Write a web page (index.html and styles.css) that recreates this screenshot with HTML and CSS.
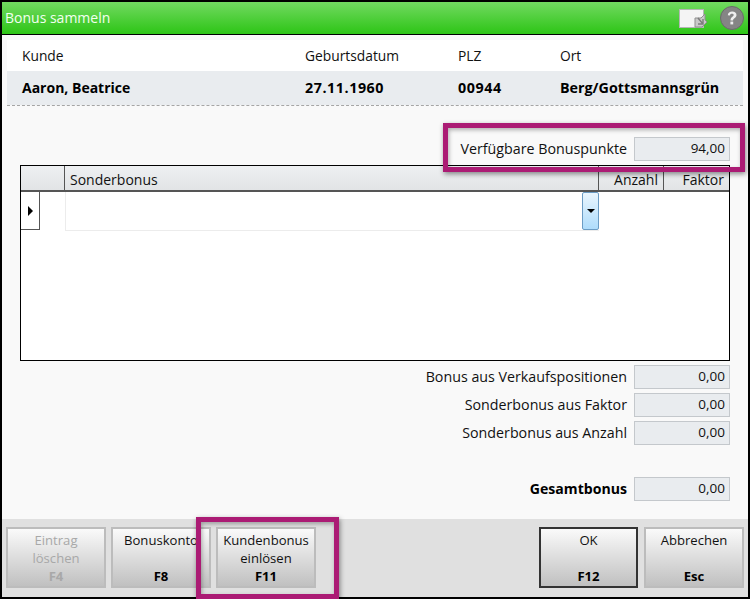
FILE: index.html
```html
<!DOCTYPE html>
<html lang="de">
<head>
<meta charset="utf-8">
<title>Bonus sammeln</title>
<link rel="stylesheet" href="styles.css">
</head>
<body>
<div class="window">
  <header class="titlebar">
    <span class="title">Bonus sammeln</span>
    <svg class="icon-window" width="28" height="20" viewBox="0 0 28 20">
      <rect x="0.5" y="1.5" width="24" height="18" fill="#f4f4f4" stroke="#b5b5b5"/>
      <path d="M16 19V10h6l4-4v6l2 2-5 5z" fill="#c9c9c9" stroke="#8f8f8f"/>
      <path d="M19 10l5 6M24 11v5h-5" fill="none" stroke="#7c7c7c" stroke-width="1.4"/>
    </svg>
    <svg class="icon-help" width="24" height="24" viewBox="0 0 24 24">
      <circle cx="12" cy="12" r="11.5" fill="#858585" stroke="#6a6a6a"/>
      <path d="M7.8 9.2C8 6.8 9.8 5.5 12.2 5.5c2.6 0 4.3 1.4 4.3 3.5 0 3-3.4 3-3.4 5.4h-2.6c0-3.5 3.2-3.6 3.2-5.3 0-.9-.8-1.4-1.8-1.4-1.1 0-1.9.6-2 1.8z" fill="#eeeeee"/>
      <rect x="10.4" y="15.6" width="2.8" height="2.8" fill="#eeeeee"/>
    </svg>
  </header>

  <main class="content">
    <section class="customer">
      <div class="customer-row customer-head">
        <span>Kunde</span><span>Geburtsdatum</span><span>PLZ</span><span>Ort</span>
      </div>
      <div class="customer-row customer-data">
        <span class="cust-name">Aaron, Beatrice</span><span class="cust-num">27.11.1960</span><span class="cust-num">00944</span><span>Berg/Gottsmannsgrün</span>
      </div>
    </section>

    <div class="field-row points-row">
      <span class="label">Verfügbare Bonuspunkte</span>
      <span class="value">94,00</span>
    </div>

    <section class="grid">
      <div class="grid-head">
        <span class="gh gh-corner"></span>
        <span class="gh gh-name">Sonderbonus</span>
        <span class="gh gh-num gh-count">Anzahl</span>
        <span class="gh gh-num gh-factor">Faktor</span>
      </div>
      <div class="grid-row">
        <span class="row-marker"><i class="marker-arrow"></i></span>
        <span class="combo"><span class="combo-btn"><i class="combo-arrow"></i></span></span>
      </div>
    </section>

    <div class="totals">
      <div class="field-row"><span class="label">Bonus aus Verkaufspositionen</span><span class="value">0,00</span></div>
      <div class="field-row"><span class="label">Sonderbonus aus Faktor</span><span class="value">0,00</span></div>
      <div class="field-row"><span class="label">Sonderbonus aus Anzahl</span><span class="value">0,00</span></div>
      <div class="field-row total-row"><span class="label strong">Gesamtbonus</span><span class="value">0,00</span></div>
    </div>
  </main>

  <footer class="footer">
    <div class="btn-group">
      <button class="btn disabled" type="button"><span class="btn-text">Eintrag<br>löschen</span><b>F4</b></button>
      <button class="btn" type="button"><span class="btn-text">Bonuskonto</span><b>F8</b></button>
      <button class="btn" type="button"><span class="btn-text">Kundenbonus<br>einlösen</span><b>F11</b></button>
    </div>
    <div class="btn-group btn-group-end">
      <button class="btn primary" type="button"><span class="btn-text">OK</span><b>F12</b></button>
      <button class="btn" type="button"><span class="btn-text">Abbrechen</span><b>Esc</b></button>
    </div>
  </footer>

  <div class="mark mark-points"></div>
  <div class="mark mark-button"></div>
</div>
</body>
</html>
```

FILE: styles.css
```css
* { box-sizing: border-box; }
html, body { margin: 0; padding: 0; }
body {
  width: 750px;
  height: 599px;
  overflow: hidden;
  font-family: "Open Sans", "Noto Sans", sans-serif;
  font-size: 13.5px;
  color: #111;
}
.window {
  position: relative;
  width: 750px;
  height: 599px;
  border: 2px solid #000;
  display: flex;
  flex-direction: column;
  background: #f9f9f9;
}
.titlebar {
  height: 33px;
  flex: none;
  border-bottom: 1px solid #000;
  background: linear-gradient(#72d961, #2dc516);
  display: flex;
  align-items: center;
  padding: 0 2px 0 3px;
}
.title { color: #f2fff0; font-size: 14px; flex: 1; margin-top: -2px; }
.icon-window { margin-right: 13px; margin-top: -1px; }
.icon-help { margin-right: 2px; margin-top: -1px; }

.content {
  flex: 1;
  padding: 5px 5px 0;
  display: flex;
  flex-direction: column;
}
.customer { border-bottom: 1px dashed #a5a5a5; height: 66px; flex: none; }
.customer-row {
  display: grid;
  grid-template-columns: 283px 153px 102px 1fr;
  padding-left: 15px;
  align-items: center;
}
.customer-head { height: 31px; background: #fff; font-size: 13.8px; }
.customer-data { height: 34px; padding-bottom: 2px; background: #e9ecef; font-weight: 700; color: #000; font-size: 14.3px; }
.cust-name { font-size: 14px; }
.cust-num { letter-spacing: .55px; }

.field-row {
  display: flex;
  justify-content: flex-end;
  align-items: center;
  gap: 7px;
  height: 24px;
  padding-right: 13px;
}
.points-row { margin-top: 31px; }
.label { white-space: nowrap; font-size: 14.25px; margin-top: -2px; }
.label.strong { font-weight: 700; color: #000; font-size: 14.1px; }
.value {
  width: 96px;
  height: 24px;
  border: 1px solid #c4c8cc;
  background: #e9ecef;
  text-align: right;
  padding-right: 4px;
  line-height: 21px;
}

.grid {
  margin: 4px 13px 0;
  height: 196px;
  flex: none;
  border: 1px solid #000;
  background: #fff;
}
.grid-head {
  height: 26px;
  display: grid;
  grid-template-columns: 44px 534px 65px 1fr;
  border-bottom: 2px solid #555;
  background: linear-gradient(#eef0f2, #e2e4e6);
  font-size: 14px;
}
.gh { height: 24px; line-height: 27px; padding: 0 5px; border-right: 1px solid #555; }
.gh-factor { border-right: 0; }
.gh-num { text-align: right; }
.grid-row { display: flex; height: 39px; align-items: flex-start; }
.row-marker {
  width: 19px;
  height: 38px;
  border-right: 1px solid #555;
  border-bottom: 1px solid #555;
  display: flex;
  align-items: center;
  padding-left: 7px;
}
.marker-arrow {
  border-left: 5px solid #000;
  border-top: 5px solid transparent;
  border-bottom: 5px solid transparent;
}
.combo {
  margin-left: 25px;
  width: 534px;
  height: 39px;
  border-left: 1px solid #ececec;
  border-bottom: 1px solid #ececec;
  display: flex;
  justify-content: flex-end;
}
.combo-btn {
  width: 17px;
  height: 38px;
  border: 1px solid #6b9cc4;
  border-radius: 2px;
  background: linear-gradient(#eaf6fe, #aedcfb);
  display: flex;
  align-items: center;
  justify-content: center;
}
.combo-arrow {
  border-top: 4px solid #000;
  border-left: 4px solid transparent;
  border-right: 4px solid transparent;
}

.totals { margin-top: 4px; display: flex; flex-direction: column; gap: 4px; }
.total-row { margin-top: 28px; }

.footer {
  height: 78px;
  flex: none;
  margin-top: auto;
  background: #e0e0e0;
  display: flex;
  justify-content: space-between;
  padding: 8px 4px 9px;
}
.btn-group { display: flex; gap: 5px; }
.btn-group-end { gap: 6px; }
.btn {
  width: 100px;
  height: 61px;
  border: 2px solid #bcbcbc;
  background: linear-gradient(#fafafa, #c0c0c0);
  font: inherit;
  font-size: 13.1px;
  color: #111;
  padding: 0;
  display: flex;
  flex-direction: column;
  align-items: center;
  justify-content: space-between;
}
.btn-text { line-height: 18px; margin-top: 2px; }
.btn b { color: #000; margin-bottom: 1px; line-height: 18px; }
.btn.disabled, .btn.disabled b { color: #a8a8a8; }
.btn.primary { border-color: #333; width: 99px; }

.mark {
  position: absolute;
  border: 5px solid #ab1b74;
  box-shadow: 1px 2px 5px rgba(0,0,0,.45), inset 1px 2px 4px rgba(0,0,0,.3);
}
.mark-points { left: 441px; top: 121px; width: 302px; height: 49px; }
.mark-button { left: 194px; top: 515px; width: 143px; height: 82px; }
```
